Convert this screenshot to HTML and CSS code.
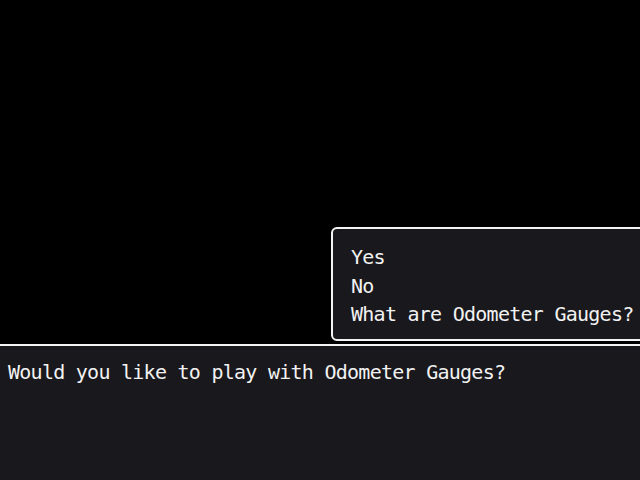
FILE: index.html
```html
<!DOCTYPE html>
<html lang="en">
<head>
<meta charset="utf-8">
<title>Odometer Gauges</title>
<link rel="stylesheet" href="styles.css">
</head>
<body>
  <div class="scene">
    <div class="choice-row">
      <ul class="window choice-window">
        <li class="choice">Yes</li>
        <li class="choice">No</li>
        <li class="choice">What are Odometer Gauges?</li>
      </ul>
    </div>
    <div class="window message-window">
      <p class="message">Would you like to play with Odometer Gauges?</p>
    </div>
  </div>
</body>
</html>
```

FILE: styles.css
```css
html, body {
  margin: 0;
  padding: 0;
  background: #000;
}

.scene {
  width: 640px;
  height: 480px;
  overflow: hidden;
  display: flex;
  flex-direction: column;
  padding-top: 227px;
  box-sizing: border-box;
  gap: 3px;
  font-family: "DejaVu Sans Mono", "Liberation Mono", monospace;
  font-size: 20px;
  letter-spacing: -0.74px;
  color: #f2f2f2;
}

.window {
  background: #19181c;
  border: 2px solid #f4f4f4;
  border-radius: 6px;
  box-sizing: border-box;
}

.choice-row {
  display: flex;
  padding-left: 331px;
}

.choice-window {
  list-style: none;
  margin: 0;
  width: 330px;
  height: 114px;
  flex-shrink: 0;
  padding: 14px 0 0 18px;
  line-height: 28.5px;
}

.choice {
  white-space: nowrap;
}

.message-window {
  margin-left: -10px;
  width: 670px;
  flex: 1 0 auto;
  padding: 12px 0 0 16px;
  border-bottom: none;
  border-radius: 6px 6px 0 0;
}

.message {
  margin: 0;
  line-height: 28.5px;
  white-space: nowrap;
}
```
